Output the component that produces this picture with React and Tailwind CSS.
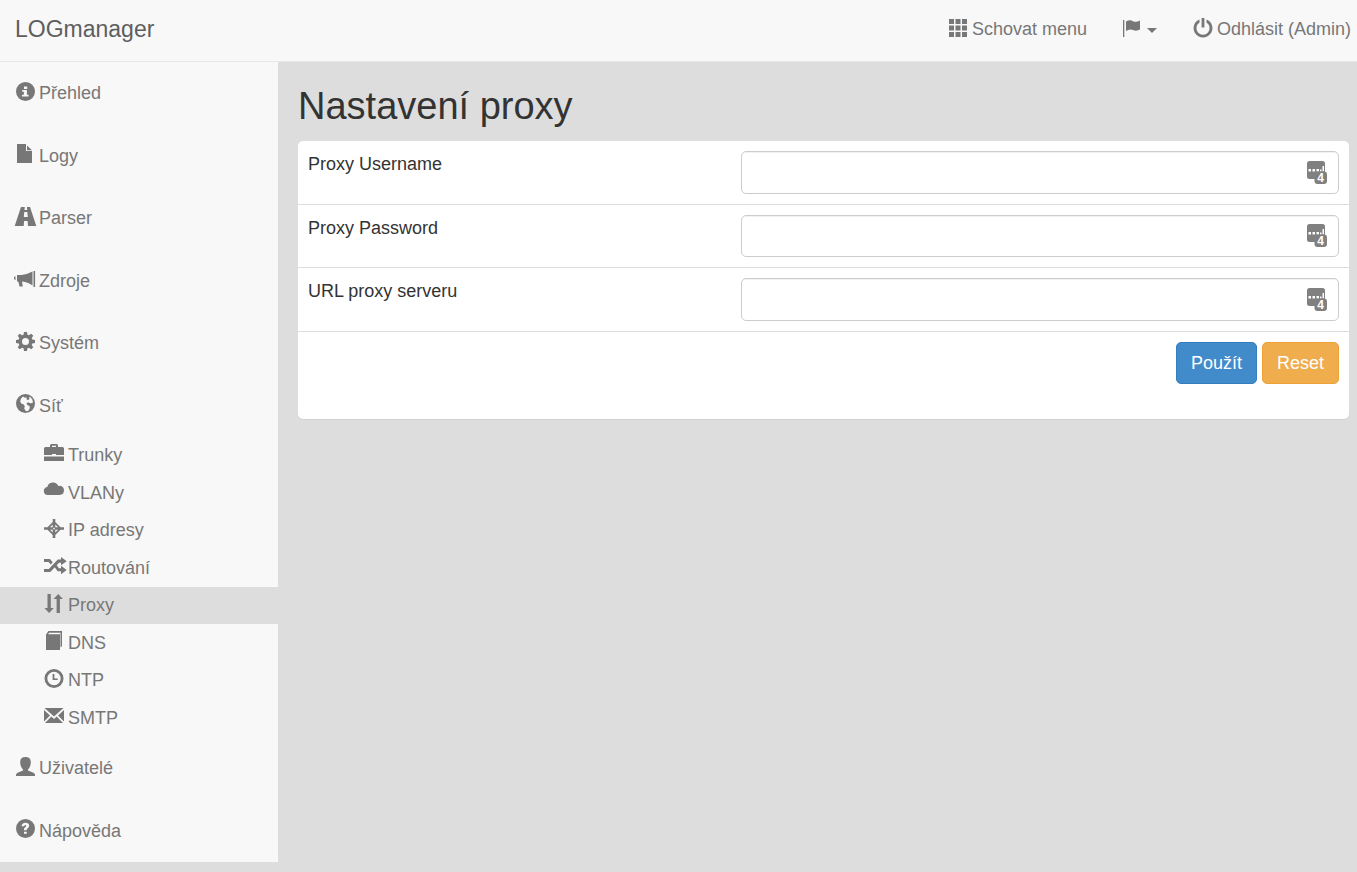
import { useState } from "react";

/* Glyphs, all drawn on a 20x20 grid */
const ICONS = {
    info: (
        <path fillRule="evenodd" d="M10.500 0a9.500 9.500 0 1 1 0 19a9.500 9.500 0 0 1 0-19zM9 4.500v2.500h3.200V4.500zM7.200 8v1.700h1.700v3H7v1.800h6.600v-1.800h-1.700V8z" />
    ),
    file: <path d="M2 0h9v7h6v12H2zM12 1.500l5 4.700h-5z" />,
    road: (
        <path fillRule="evenodd" d="M6 0h3.800L9.500 3h2.700L11.900 0H15l6.300 19h-8.300l-.4-5H9.100l-.4 5h-9zM9.300 5l-.5 5h4L12.300 5z" />
    ),
    bullhorn: (
        <path d="M-1 8.500Q-1 7.500 .5 7.300V11Q-1 10.800-1 9.800zM2 6h4.500Q12 5.500 17.500 2.500v14Q13 13 7 12.500L7.800 17.500H4.500L3.300 12.500H2zM18.500 2h1.600v16h-1.600z" />
    ),
    cog: (
        <path
            fillRule="evenodd"
            d="M9 0h3l.5 2.700 1.400.6L16.200 1.700l2.100 2.100-1.600 2.300.6 1.400 2.700.5v3l-2.700.5-.6 1.400 1.600 2.300-2.100 2.100-2.300-1.600-1.400.6L12 19H9l-.5-2.700-1.400-.6-2.300 1.600-2.100-2.100 1.600-2.300-.6-1.400L1 11V8l2.700-.5.6-1.400-1.600-2.300 2.100-2.100 2.300 1.600 1.400-.6zM10.500 6a3.500 3.500 0 1 0 0 7a3.500 3.500 0 0 0 0-7z"
        />
    ),
    globe: (
        <path
            fillRule="evenodd"
            d="M10.500 0a9.500 9.500 0 1 1 0 19a9.500 9.500 0 0 1 0-19zM8 2.500L6 4.500 5.200 7.500 6.500 9.800 8.500 10.200 9.800 12.200 9.200 14.500 11 17.200 13.500 16.800 14.800 14 14.500 12 12.300 11 11.500 9.500 13 8.300 15.500 9.300 17.800 9 17.500 5.800 15.300 3 14.200 2.800 14.500 4.800 13 6.300 11.500 5.300 11.800 3.500 10 3.800z"
        />
    ),
    briefcase: (
        <path
            fillRule="evenodd"
            d="M6 3V1.500Q6 0 7.500 0h5Q14 0 14 1.500V3h4.500Q20 3 20 4.500V11h-8V10H8v1H0V4.500Q0 3 1.500 3zM8 1.800V3h4V1.800zM0 12.500h20V17H0z"
        />
    ),
    cloud: (
        <path d="M4.200 14A4 4 0 0 1 .8 7.200Q1.800 6 3.300 6A5.800 5.800 0 0 1 14.300 4.900Q19.800 4.500 20 9.500Q19.900 13.500 15.500 14z" />
    ),
    screenshot: (
        <path
            fillRule="evenodd"
            d="M8.700 0h2.600v3L16.500 8.200H20v2.600h-3.500L11.300 16v3H8.700v-3L3.500 10.800H0V8.200h3.500L8.700 3zM8.700 5.500L6 8.200h2.700zM11.300 5.500v2.700H14zM6 10.800l2.700 2.700v-2.700zM11.300 10.800v2.700l2.700-2.700zM9.200 8.700v1.600h1.600V8.700z"
        />
    ),
    random: (
        <path d="M0 3h6l2.700 3.200-1.900 2.200L4.500 6H0zM17 1l5.700 4.300L17 9.300V6.800h-2L6.300 16H0v-3h4.800l9-9.500H17zM10.500 11l2-2 2.500 3.200h2V9.700l5.700 4.300-5.700 4.300v-3h-3.300z" />
    ),
    sort: <path d="M3.500 0h3.300v14h3L5.100 19 .4 14h3.100zM14.200 0l4.700 5h-3v14h-3.300V5h-3z" />,
    book: (
        <path d="M2 3.500L4.500 0H18v15l-1.500 1.500V1.800H5.200L4 3.200h12V19H2z" />
    ),
    time: (
        <path
            fillRule="evenodd"
            d="M10 0a9.500 9.500 0 1 1 0 19a9.500 9.500 0 0 1 0-19zM10 2.800a6.700 6.700 0 1 0 0 13.400a6.700 6.700 0 0 0 0-13.400zM8.600 5h1.800v4.400h3.300v1.700H8.600z"
        />
    ),
    envelope: (
        <path d="M.5 2h19L10 10.500zM0 4l6 5.500L0 15.500zM20 4l-6 5.500 6 6zM7.300 10.500l2.700 2.400 2.700-2.400 6.300 6.500H1z" />
    ),
    user: (
        <path d="M10.500 0Q15.800 0 15.800 5Q15.800 10 13 12.500v1L18.500 15.800Q20 16.500 20 18V19H1v-1Q1 16.500 2.500 15.800L8 13.500v-1Q5.200 10 5.200 5Q5.200 0 10.500 0z" />
    ),
    question: (
        <path
            fillRule="evenodd"
            d="M10.500 0a9.500 9.500 0 1 1 0 19a9.500 9.500 0 0 1 0-19zM6.600 7.300h2.700Q9.400 5.800 10.700 6Q11.600 6.300 11.200 7.300L9.300 9.200Q8.900 9.800 9 11.300h2.600Q11.600 10 12.500 9.400Q14.400 8 14.200 6.500Q13.800 3.700 10.500 3.700Q6.800 3.800 6.600 7.300zM9 12.800v2h2.800v-2z"
        />
    ),
    grid: (
        <path d="M1 2h5v5H1zM7.500 2h5v5h-5zM14 2h5v5h-5zM1 8.500h5v5H1zM7.500 8.500h5v5h-5zM14 8.500h5v5h-5zM1 15h5v5H1zM7.500 15h5v5h-5zM14 15h5v5h-5z" />
    ),
    flag: (
        <path d="M0 3h1.300v17H0zM3 4.500Q7 2.300 10 4.200Q13 5.500 17 3.500v9Q13.500 14.500 10 13Q6.500 11.500 3 14z" />
    ),
    off: (
        <path d="M8.600 1h2.800v9.500H8.600zM6.500 2.400v3.100a6.600 6.600 0 1 0 7 0V2.400a9.400 9.400 0 1 1-7 0z" />
    ),
};

const MENU = [
    { label: "Přehled", icon: "info" },
    { label: "Logy", icon: "file" },
    { label: "Parser", icon: "road" },
    { label: "Zdroje", icon: "bullhorn" },
    { label: "Systém", icon: "cog" },
    {
        label: "Síť",
        icon: "globe",
        children: [
            { label: "Trunky", icon: "briefcase" },
            { label: "VLANy", icon: "cloud" },
            { label: "IP adresy", icon: "screenshot" },
            { label: "Routování", icon: "random" },
            { label: "Proxy", icon: "sort", active: true },
            { label: "DNS", icon: "book" },
            { label: "NTP", icon: "time" },
            { label: "SMTP", icon: "envelope" },
        ],
    },
    { label: "Uživatelé", icon: "user" },
    { label: "Nápověda", icon: "question" },
];

const FIELDS = [
    { id: "proxy-username", label: "Proxy Username", type: "text" },
    { id: "proxy-password", label: "Proxy Password", type: "password" },
    { id: "proxy-url", label: "URL proxy serveru", type: "text" },
];

function Icon({ name, className = "" }) {
    return (
        <svg viewBox="0 0 20 20" className={`h-5 w-5 shrink-0 overflow-visible ${className}`} fill="currentColor" aria-hidden="true">
            {ICONS[name]}
        </svg>
    );
}

// Badge of the password helper, shown at the right end of each input
function KeyBadge() {
    return (
        <svg viewBox="0 0 20 24" className="absolute top-1/2 right-3 h-6 w-5 -translate-y-1/2 pointer-events-none" aria-hidden="true">
            <rect x="0" y="0" width="18" height="18" rx="2.500" fill="#808080" />
            <path d="M1.500 8h2.500v2.500H1.500zM5.500 8H8v2.500H5.500zM9.500 8H12v2.500H9.500zM13 8.500h1.500v2H13zM15.500 5H17v5.500h-1.500z" fill="#fff" />
            <rect x="7.500" y="10.500" width="12.500" height="12.500" rx="3" fill="#808080" />
            <text x="13.500" y="21" textAnchor="middle" fill="#fff" fontSize="12" fontWeight="700">4</text>
        </svg>
    );
}

function Header() {
    return (
        <header className="flex items-center justify-between border-b border-[#e7e7e7] bg-[#f8f8f8] pl-[15px] pr-1.5 h-[62px]">
            <a href="#" className="pb-1 text-[23px] leading-6 text-[#5e5e5e]">LOGmanager</a>
            <nav className="flex items-center pb-1 leading-6">
                <button type="button" className="flex items-center gap-1">
                    <Icon name="grid" className="mb-1" />
                    Schovat menu
                </button>
                <button type="button" className="ml-9 flex items-center gap-2" aria-label="Jazyk">
                    <Icon name="flag" className="mb-1" />
                    <span className="mt-1 -ml-1 border-x-5 border-t-5 border-x-transparent border-t-[#777]" />
                </button>
                <a href="#" className="ml-9 flex items-center gap-1">
                    <Icon name="off" className="mb-1" />
                    Odhlásit (Admin)
                </a>
            </nav>
        </header>
    );
}

function Sidebar() {
    return (
        <aside className="w-[278px] shrink-0 self-start bg-[#f8f8f8]">
            <ul>
                {MENU.map((item, i) => (
                    <li key={item.label}>
                        <a href="#" className={`flex items-center gap-1 pl-[15px] ${i % 2 ? "h-[62px]" : "h-[63px]"}`}>
                            <Icon name={item.icon} className="mb-1" />
                            {item.label}
                        </a>
                        {item.children && (
                            <ul>
                                {item.children.map((sub, j) => (
                                    <li key={sub.label}>
                                        <a
                                            href="#"
                                            className={`flex items-center gap-1 pl-11 ${j % 2 ? "h-[38px]" : "h-[37px]"} ${sub.active ? "bg-[#ddd]" : ""}`}
                                        >
                                            <Icon name={sub.icon} className="mb-1" />
                                            {sub.label}
                                        </a>
                                    </li>
                                ))}
                            </ul>
                        )}
                    </li>
                ))}
            </ul>
        </aside>
    );
}

function ProxyForm() {
    const [values, setValues] = useState({});

    return (
        <form
            className="rounded-[5px] bg-white text-[#333] shadow-2xs"
            onSubmit={(e) => e.preventDefault()}
            onReset={() => setValues({})}
        >
            {FIELDS.map((field, i) => (
                <div key={field.id} className="flex border-b border-[#ddd] p-2.5">
                    <label htmlFor={field.id} className="w-[42%] leading-[26px]">{field.label}</label>
                    <div className="relative w-[58%]">
                        <input
                            id={field.id}
                            type={field.type}
                            value={values[field.id] ?? ""}
                            onChange={(e) => setValues({ ...values, [field.id]: e.target.value })}
                            className={`block w-full rounded-[5px] border border-[#ccc] bg-white pl-4 pr-10 inset-shadow-2xs outline-none focus:border-[#66afe9] ${i % 2 ? "h-[42px]" : "h-[43px]"}`}
                        />
                        <KeyBadge />
                    </div>
                </div>
            ))}
            <div className="flex justify-end gap-[5px] px-2.5 pt-2.5 pb-[35px] text-white">
                <button type="submit" className="h-[42px] rounded-[5px] border border-[#357ebd] bg-[#428bca] px-3.5">
                    Použít
                </button>
                <button type="reset" className="h-[42px] rounded-[5px] border border-[#eea236] bg-[#f0ad4e] px-3.5">
                    Reset
                </button>
            </div>
        </form>
    );
}

export default function App() {
    return (
        <div className="min-h-screen bg-[#ddd] font-['Liberation_Sans',Arial,sans-serif] text-[18px] text-[#777]">
            <Header />
            <div className="flex">
                <Sidebar />
                <main className="min-w-0 flex-1 pt-6 pr-2 pl-5">
                    <h1 className="mb-3.5 text-[38px] leading-[41px] text-[#333]">Nastavení proxy</h1>
                    <ProxyForm />
                </main>
            </div>
        </div>
    );
}
